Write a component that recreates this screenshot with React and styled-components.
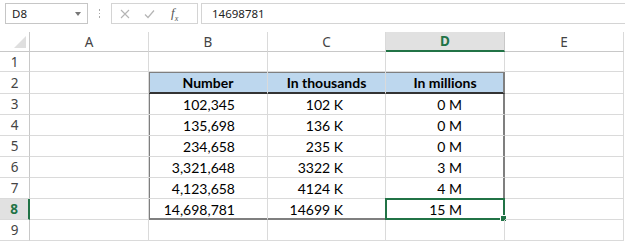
import styled, { createGlobalStyle, css } from "styled-components";

const GlobalStyle = createGlobalStyle`
  html, body {
    margin: 0;
    padding: 0;
    background: #fff;
  }
  body {
    font-family: "Lato", "Liberation Sans", sans-serif;
  }
`;

const GREEN = "#217346";
const GRID = "#dadada";
const FRAME = "#7f7f7f";

const COLS = [
  { key: "A", width: 119, pad: 6 },
  { key: "B", width: 119, pad: 32 },
  { key: "C", width: 118, pad: 42 },
  { key: "D", width: 119, pad: 42 },
  { key: "E", width: 119, pad: 6 },
];

const ROW_HEIGHTS = [20, 22, 21, 21, 21, 21, 21, 21, 21];

const table = {
  2: ["Number", "In thousands", "In millions"],
  3: ["102,345", "102 K", "0 M"],
  4: ["135,698", "136 K", "0 M"],
  5: ["234,658", "235 K", "0 M"],
  6: ["3,321,648", "3322 K", "3 M"],
  7: ["4,123,658", "4124 K", "4 M"],
  8: ["14,698,781", "14699 K", "15 M"],
};

const Page = styled.div`
  width: 625px;
  height: 243px;
  overflow: hidden;
  background: #fff;
`;

const FormulaBar = styled.div`
  display: flex;
  align-items: stretch;
  height: 21px;
  padding: 3px 0 0 5px;
  margin-bottom: 8px;
`;

const NameBox = styled.div`
  width: 83px;
  box-sizing: border-box;
  border: 1px solid #c6c6c6;
  display: flex;
  align-items: center;
  justify-content: space-between;
  padding: 0 6px 0 6px;
  font-family: "Noto Sans", "Liberation Sans", sans-serif;
  font-size: 11.5px;
  color: #222;
`;

const Arrow = styled.span`
  width: 0;
  height: 0;
  border-left: 3.5px solid transparent;
  border-right: 3.5px solid transparent;
  border-top: 4px solid #777;
`;

const Dots = styled.div`
  width: 23px;
  display: flex;
  flex-direction: column;
  align-items: center;
  justify-content: center;
  gap: 2px;

  span {
    width: 1.5px;
    height: 1.5px;
    background: #aaa;
  }
`;

const Buttons = styled.div`
  width: 87px;
  box-sizing: border-box;
  border: 1px solid #d4d4d4;
  display: flex;
  align-items: center;
  padding: 0 0 0 8px;
  gap: 14px;
  margin-right: 3px;
`;

const Fx = styled.span`
  font-family: "Liberation Serif", serif;
  font-style: italic;
  font-size: 13px;
  color: #555;
  margin-left: 2px;

  sub {
    font-size: 8px;
  }
`;

const Input = styled.div`
  flex: 1;
  border: 1px solid #d4d4d4;
  border-right: none;
  display: flex;
  align-items: center;
  padding-left: 10px;
  font-family: "Noto Sans", "Liberation Sans", sans-serif;
  font-size: 11.5px;
  color: #222;
`;

const Sheet = styled.div`
  display: grid;
  grid-template-columns: 30px ${COLS.map((c) => c.width + "px").join(" ")};
  grid-template-rows: 20px ${ROW_HEIGHTS.map((h) => h + "px").join(" ")};
`;

const Corner = styled.div`
  position: relative;
  box-sizing: border-box;
  border-right: 1px solid #c8c8c8;
  border-bottom: 1px solid #c8c8c8;

  &::after {
    content: "";
    position: absolute;
    right: 3px;
    bottom: 3px;
    width: 0;
    height: 0;
    border-left: 12px solid transparent;
    border-bottom: 12px solid #dfdfdf;
  }
`;

const HeaderCell = styled.div`
  box-sizing: border-box;
  display: flex;
  align-items: center;
  justify-content: center;
  font-family: "Noto Sans", "Liberation Sans", sans-serif;
  font-size: 13.5px;
  color: #444;
  border-right: 1px solid ${GRID};
  border-bottom: 1px solid #c8c8c8;

  ${(p) =>
    p.$active &&
    css`
      background: #e1e1e1;
      color: ${GREEN};
      font-weight: 700;
      border-bottom: 2px solid ${GREEN};
      border-right-color: #c8c8c8;
    `}
`;

const RowHead = styled.div`
  box-sizing: border-box;
  display: flex;
  align-items: center;
  justify-content: center;
  font-family: "Noto Sans", "Liberation Sans", sans-serif;
  font-size: 13.5px;
  color: #444;
  border-right: 1px solid #c8c8c8;
  border-bottom: 1px solid ${GRID};

  ${(p) =>
    p.$active &&
    css`
      background: #e1e1e1;
      color: ${GREEN};
      font-weight: 700;
      border-right: 2px solid ${GREEN};
    `}
`;

const Cell = styled.div`
  position: relative;
  box-sizing: border-box;
  display: flex;
  align-items: center;
  justify-content: ${(p) => (p.$center ? "center" : "flex-end")};
  padding-right: ${(p) => (p.$center ? 0 : p.$pad)}px;
  font-size: 14px;
  font-weight: ${(p) => (p.$bold ? 700 : 400)};
  color: #000;
  background: ${(p) => (p.$fill ? "#bdd7ee" : "transparent")};
  border-right: 1px solid ${(p) => (p.$frameRight ? FRAME : GRID)};
  border-bottom: 1px solid
    ${(p) => (p.$darkBottom ? "#333" : p.$frameBottom ? FRAME : GRID)};
  box-shadow: ${(p) =>
    [
      p.$frameLeft && `inset 1px 0 0 ${FRAME}`,
      p.$frameTop && `inset 0 1px 0 ${FRAME}`,
      p.$frameRight && `inset -1px 0 0 ${FRAME}`,
      p.$frameBottom && `inset 0 -1px 0 ${FRAME}`,
      p.$darkBottom && `inset 0 -1px 0 #333`,
    ]
      .filter(Boolean)
      .join(", ") || "none"};
`;

const Selection = styled.div`
  position: absolute;
  left: -1px;
  top: -1px;
  right: -1px;
  bottom: -1px;
  border: 2px solid ${GREEN};
  pointer-events: none;

  &::after {
    content: "";
    position: absolute;
    right: -4px;
    bottom: -4px;
    width: 5px;
    height: 5px;
    background: ${GREEN};
    border: 1px solid #fff;
  }
`;

const CloseIcon = () => (
  <svg width="10" height="10" viewBox="0 0 10 10">
    <path d="M1 1 L9 9 M9 1 L1 9" stroke="#b5b5b5" strokeWidth="1.1" fill="none" />
  </svg>
);

const CheckIcon = () => (
  <svg width="11" height="10" viewBox="0 0 11 10">
    <path d="M1 5.5 L4 8.5 L10 1.5" stroke="#b5b5b5" strokeWidth="1.2" fill="none" />
  </svg>
);

const App = () => {
  const rows = ROW_HEIGHTS.map((_, i) => i + 1);

  return (
    <Page>
      <GlobalStyle />
      <FormulaBar>
        <NameBox>
          D8
          <Arrow />
        </NameBox>
        <Dots>
          <span />
          <span />
          <span />
        </Dots>
        <Buttons>
          <CloseIcon />
          <CheckIcon />
          <Fx>
            f<sub>x</sub>
          </Fx>
        </Buttons>
        <Input>14698781</Input>
      </FormulaBar>

      <Sheet>
        <Corner />
        {COLS.map((c) => (
          <HeaderCell key={c.key} $active={c.key === "D"}>
            {c.key}
          </HeaderCell>
        ))}

        {rows.map((r) => (
          <RowContent key={r} row={r} />
        ))}
      </Sheet>
    </Page>
  );
};

const RowContent = ({ row }) => {
  const values = table[row];
  return (
    <>
      <RowHead $active={row === 8}>{row}</RowHead>
      {COLS.map((c, ci) => {
        const inTable = values && ci >= 1 && ci <= 3;
        const header = row === 2;
        return (
          <Cell
            key={c.key}
            $pad={c.pad}
            $center={inTable && header}
            $bold={inTable && header}
            $fill={inTable && header}
            $frameLeft={inTable && ci === 1}
            $frameRight={inTable && ci === 3}
            $frameTop={inTable && header}
            $frameBottom={inTable && row === 8}
            $darkBottom={inTable && header}
          >
            {inTable ? values[ci - 1] : null}
            {row === 8 && c.key === "D" && <Selection />}
          </Cell>
        );
      })}
    </>
  );
};

export default App;
